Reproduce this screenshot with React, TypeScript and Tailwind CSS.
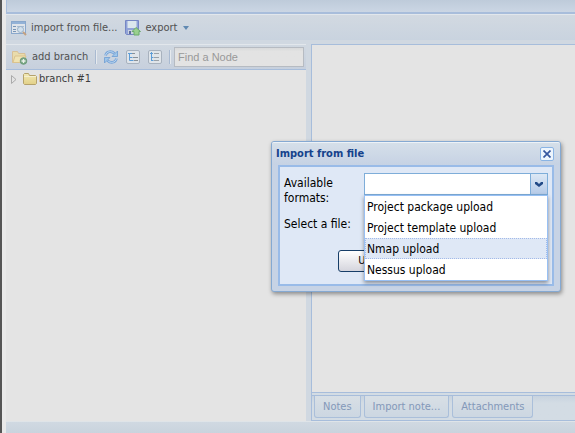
import React from "react";

function ImportIcon() {
  return (
    <svg width="16" height="16" viewBox="0 0 16 16" aria-hidden="true">
      <rect x="0.5" y="1.5" width="14" height="12" fill="#dfe4ea" stroke="#8aa8cc" />
      <path d="M1 2h13v2H1z" fill="#93b2d7" />
      <path d="M2 6.500h3M2 9.500h3M2 11.500h3" stroke="#7895b7" />
      <path d="M6 6.500h7" stroke="#a9bdd3" />
      <circle cx="9.5" cy="9.5" r="3" fill="#d1e0ed" stroke="#98b0c8" />
      <path d="M12 12l3 3" stroke="#c3a182" strokeWidth="2" />
    </svg>
  );
}

function ExportIcon() {
  return (
    <svg width="16" height="16" viewBox="0 0 16 16" aria-hidden="true">
      <path d="M0.5 0.5h13v14h-12l-1-1z" fill="#91a3d8" stroke="#7687c4" />
      <path d="M2.500 1h9v7h-9z" fill="#dce7ed" />
      <path d="M3 10h6v4H3z" fill="#cbd3e0" />
      <path d="M4 11h2v3H4z" fill="#5e6b9d" />
      <path d="M11 7.500l4.500 4H14V15H9v-3.500H7z" fill="#9ad08e" stroke="#6bab6c" strokeLinejoin="round" />
    </svg>
  );
}

function FolderAddIcon() {
  return (
    <svg width="16" height="16" viewBox="0 0 16 16" aria-hidden="true">
      <path d="M0.5 13.500v-11h5l1 2h6.500v9z" fill="#e9dcac" stroke="#d8c096" />
      <path d="M1 13.500l2-6.500h11l-2 6.500z" fill="#f0e3b2" stroke="#dbc38d" />
      <circle cx="11.500" cy="12" r="3.300" fill="#79a985" stroke="#6d9a7b" />
      <path d="M11.500 10v4M9.500 12h4" stroke="#edf2ec" strokeWidth="1.300" />
    </svg>
  );
}

function RefreshIcon() {
  return (
    <svg width="16" height="16" viewBox="0 0 16 16" aria-hidden="true">
      <path d="M2.500 6.500C3.500 2 8.500 1.500 11.500 4.500M13.500 9.500C12.500 14 7.500 14.500 4.500 11.500" fill="none" stroke="#78a5d9" strokeWidth="2.600" />
      <path d="M2.500 6.500C3.500 2 8.500 1.500 11.500 4.500M13.500 9.500C12.500 14 7.500 14.500 4.500 11.500" fill="none" stroke="#bad6ef" />
      <path d="M14.500 2v5.500H9zM1.500 14V8.500H7z" fill="#9dc6eb" stroke="#6f9dd2" strokeWidth="0.8" />
    </svg>
  );
}

function TreeIcon({ nested }: { nested: boolean }) {
  return (
    <svg width="16" height="16" viewBox="0 0 16 16" aria-hidden="true">
      <rect x="1.500" y="1.500" width="13" height="13" rx="1.500" fill="#e0e5ea" stroke="#a8b2be" />
      {nested ? (
        <>
          <path d="M3 4.500h4M4.500 4v7.500h4M4.500 8.500h3" fill="none" stroke="#5c9cd6" />
          <path d="M7 4.500h3M8 8.500h5M9 11.500h4" stroke="#8a9197" />
        </>
      ) : (
        <>
          <path d="M3 4.500h3M4.500 3v9M4.500 8.500h2M4.500 11.500h2" fill="none" stroke="#5c9cd6" />
          <path d="M7 4.500h5M7 8.500h5M7 11.500h5" stroke="#9aa1a8" />
        </>
      )}
    </svg>
  );
}

function FolderIcon() {
  return (
    <svg width="16" height="16" viewBox="0 0 16 16" aria-hidden="true">
      <defs>
        <linearGradient id="folder" x2="0" y2="1">
          <stop stopColor="#f2e9b5" />
          <stop offset="1" stopColor="#e2d087" />
        </linearGradient>
      </defs>
      <path d="M1.500 12.500v-9l1-1h4l1 2h6l1 1v7l-1 1h-11z" fill="url(#folder)" stroke="#b4a26d" />
      <path d="M2 5.500h12" stroke="#f5efd0" />
    </svg>
  );
}

const tabs = ["Notes", "Import note...", "Attachments"];
const formats = ["Project package upload", "Project template upload", "Nmap upload", "Nessus upload"];

function Separator() {
  return <span className="h-3.5 w-0.5 border-l border-[#a9bad1] border-r border-r-[#e6eaee]" />;
}

function Toolbar() {
  return (
    <div className="flex h-[26px] items-center border-t border-[#e2e7ec] bg-gradient-to-b from-[#d2d9e1] to-[#c9d3df] pl-[5px]">
      <button className="flex items-center gap-1 whitespace-nowrap"><ImportIcon />import from file...</button>
      <button className="ml-2 flex items-center gap-1 whitespace-nowrap">
        <ExportIcon />export
        <svg className="ml-px" width="6" height="4" viewBox="0 0 6 4" aria-hidden="true"><path d="M0 0h6L3 4z" fill="#6089b2" /></svg>
      </button>
    </div>
  );
}

function TreePanel() {
  return (
    <section className="flex w-[300px] shrink-0 flex-col">
      <div className="flex h-[26px] items-center border-t border-b border-t-[#e2e7ec] border-b-[#a7bddb] bg-gradient-to-b from-[#d0d8e1] to-[#c7d0dd] pl-1.5">
        <button className="flex w-20 items-center gap-1 whitespace-nowrap"><FolderAddIcon />add branch</button>
        <span className="ml-[3px] flex"><Separator /></span>
        <button className="ml-1.5" aria-label="Refresh"><RefreshIcon /></button>
        <button className="ml-1.5" aria-label="Expand all"><TreeIcon nested /></button>
        <button className="ml-1.5" aria-label="Collapse all"><TreeIcon nested={false} /></button>
        <span className="ml-1.5 flex"><Separator /></span>
        <input aria-label="Find a Node" placeholder="Find a Node" className="mr-0.5 ml-[3px] h-5 min-w-0 flex-1 border border-[#b6bbc2] bg-gradient-to-b from-[#d9dadb] to-[#e3e3e3] to-20% px-[3px] font-['Liberation_Sans',Arial,sans-serif] text-[11px] placeholder:text-[#999]" />
      </div>
      <div className="flex-1 bg-[#e4e4e4]">
        <div className="flex h-[18px] items-center pl-[5px]">
          <svg width="6" height="9" viewBox="0 0 6 9" aria-hidden="true"><path d="M.5.5v8l4.500-4z" fill="#e4e4e4" stroke="#aaa" /></svg>
          <span className="ml-[5px]"><FolderIcon /></span>
          <span className="ml-px text-[#3c3c3c]">branch #1</span>
        </div>
      </div>
    </section>
  );
}

function NotesPanel() {
  return (
    <section className="flex min-w-0 flex-1 flex-col border-t border-b border-l border-[#a7bddb] bg-[#e4e4e4]">
      <div className="flex-1" />
      <div className="h-7 border-t border-[#a7bddb] bg-[#d3dce4] pt-0.5">
        <div className="flex h-[25px] gap-[3px] border-t border-[#a7bddb] bg-gradient-to-b from-[#c8d3df] to-[#d3dce4] to-30% pl-0.5" role="tablist">
          {tabs.map((tab) => (
            <button key={tab} role="tab" className="h-[22px] rounded-b-[3px] border border-t-0 border-[#aabfda] bg-gradient-to-b from-[#d8dfe5] to-[#ccd7e2] px-2 whitespace-nowrap text-[#8398b9]">{tab}</button>
          ))}
        </div>
      </div>
    </section>
  );
}

function ImportDialog() {
  return (
    <div role="dialog" aria-labelledby="dialog-title" className="absolute top-[141px] left-[271px] w-[290px] rounded-[3px] border border-[#85a9d2] bg-[#c7d3e5] px-1.5 pb-[5px] text-[12px] text-black shadow-[1px_2px_4px_#0006]">
      <div className="-mx-1.5 flex h-[23px] items-center justify-between rounded-t-[2px] border-t border-[#edf2f7] bg-gradient-to-b from-[#d5dfe9] to-[#c6d2e4] pr-1.5 pl-1">
        <h1 id="dialog-title" className="text-[11px] font-bold text-[#15428b]">Import from file</h1>
        <button aria-label="Close" className="flex h-3.5 w-3.5 items-center justify-center rounded-[2px] border border-[#8ab4e4] bg-[#edf5fd]">
          <svg width="8" height="8" viewBox="0 0 8 8" aria-hidden="true"><path d="M.5.5l7 7M7.500.5l-7 7" stroke="#36579f" strokeWidth="1.700" /></svg>
        </button>
      </div>
      <form className="h-[121px] border-2 border-[#99bbe8] bg-[#dfe8f6] pt-1.5 pr-1 pl-1" onSubmit={(e) => e.preventDefault()}>
        <div className="flex justify-between">
          <label htmlFor="format" className="w-[70px] pt-[3px] leading-[15px]">Available formats:</label>
          <div className="relative h-[22px] w-[184px]">
            <select id="format" defaultValue="" className="h-[22px] w-full appearance-none border border-[#7eadd9] bg-white">
              <option value="" />
              {formats.map((name) => <option key={name}>{name}</option>)}
            </select>
            <span className="pointer-events-none absolute top-px right-px flex h-5 w-[17px] items-center justify-center border-l border-[#7eadd9] bg-gradient-to-b from-[#dde8f5] to-[#b6cbe8]">
              <svg width="10" height="7" viewBox="0 0 10 7" aria-hidden="true"><path d="M1 1h2l2 2 2-2h2v2L5 6 1 3z" fill="#234a87" /></svg>
            </span>
            <ul role="listbox" aria-label="Available formats" className="absolute top-[22px] left-0 z-10 w-full border border-[#98c0f4] bg-white shadow-[0_2px_4px_#0006]">
              {formats.map((name) => (
                <li key={name} role="option" aria-selected={name === "Nmap upload"} className="flex h-[21px] items-center border border-transparent px-px whitespace-nowrap aria-selected:border-dotted aria-selected:border-[#a3bae9] aria-selected:bg-[#dfe8f6]">{name}</li>
              ))}
            </ul>
          </div>
        </div>
        <div className="mt-2 flex h-5 items-center justify-between">
          <label htmlFor="file">Select a file:</label>
          <input id="file" type="file" className="h-5 w-[180px] text-transparent file:hidden" />
        </div>
        <div className="mt-4 pl-[54px]">
          <button className="h-[22px] w-[75px] rounded-[3px] border border-[#173e68] bg-gradient-to-b from-white to-[#d5d5dd] text-[11px]">Upload</button>
        </div>
      </form>
    </div>
  );
}

export default function App() {
  return (
    <main className="relative flex h-screen overflow-hidden bg-[#d0d8e1] font-['DejaVu_Sans_Condensed','DejaVu_Sans',sans-serif] [font-stretch:condensed] text-[11px] leading-[16px] text-[#515151]">
      <div className="w-1.5 shrink-0 border-l-2 border-[#555] bg-[#e9e9e9]" />
      <div className="flex min-w-0 flex-1 flex-col">
        <header className="h-3.5 shrink-0 border-b-2 border-l border-[#a8bddb] bg-gradient-to-b from-[#becbda] to-[#cbd6e4]" />
        <Toolbar />
        <div className="flex min-h-0 flex-1 gap-[5px] pt-1">
          <TreePanel />
          <NotesPanel />
        </div>
        <footer className="h-3 shrink-0 border-t border-[#dfe4e8] bg-gradient-to-b from-[#d0d9e2] to-[#c9d3dd]" />
      </div>
      <ImportDialog />
    </main>
  );
}
